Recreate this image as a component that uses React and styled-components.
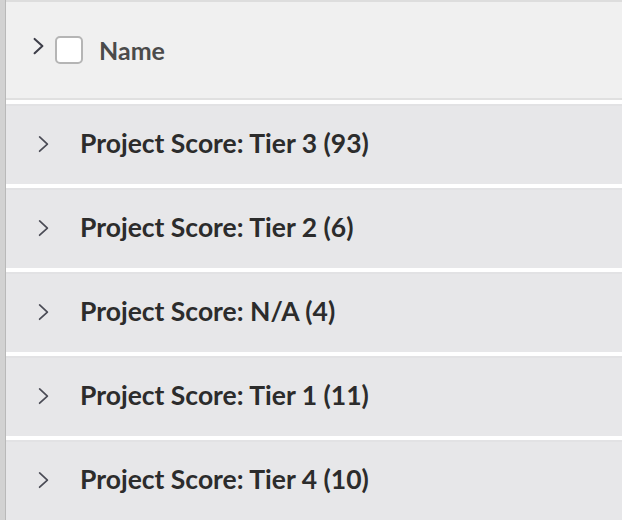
import styled, { createGlobalStyle } from "styled-components";

const GlobalStyle = createGlobalStyle`
  html, body {
    margin: 0;
    padding: 0;
    background: #ffffff;
  }
  body {
    font-family: "Lato", "Open Sans", sans-serif;
  }
`;

export const Page = styled.div`
  display: flex;
  width: 622px;
  height: 520px;
  overflow: hidden;
`;

export const Backdrop = styled.div`
  width: 5px;
  flex-shrink: 0;
  background: #d2d2d2;
  border-right: 1px solid #b9b9b9;
`;

export const Panel = styled.div`
  flex: 1;
  display: flex;
  flex-direction: column;
  gap: 4px;
  border-top: 2px solid #dddddd;
  background: #ffffff;
`;

export const Header = styled.div`
  height: 98px;
  display: flex;
  align-items: center;
  background: #f0f0f0;
  border-bottom: 2px solid #e0e0e0;
  padding-left: 26px;
  box-sizing: border-box;
  flex-shrink: 0;
`;

export const HeaderChevron = styled.span`
  display: flex;
  margin-top: -8px;
  margin-right: 10px;
  color: #3e3f4a;
`;

export const Checkbox = styled.span`
  width: 24px;
  height: 24px;
  border: 2px solid #b5b5b5;
  border-radius: 5px;
  background: #ffffff;
  margin-right: 16px;
`;

export const HeaderLabel = styled.span`
  font-size: 25px;
  font-weight: 700;
  color: #4b4b4b;
`;

export const Row = styled.div`
  height: 80px;
  display: flex;
  align-items: center;
  background: #e7e7e9;
  border-top: 2px solid #e2e2e4;
  box-sizing: border-box;
  padding-left: 31px;
  padding-bottom: 5px;
  flex-shrink: 0;
`;

export const RowChevron = styled.span`
  display: flex;
  color: #4a4b55;
  margin-right: 30px;
  margin-top: 3px;
`;

export const RowLabel = styled.span`
  font-size: 26.5px;
  font-weight: 700;
  color: #2c2c2c;
`;

const Chevron = ({ size, stroke }) => (
  <svg width={size} height={size * 1.4} viewBox="0 0 10 14" fill="none">
    <path
      d="M2 1.5 L8 7 L2 12.5"
      stroke="currentColor"
      strokeWidth={stroke}
      strokeLinecap="round"
      strokeLinejoin="round"
    />
  </svg>
);

const groups = [
  { label: "Tier 3", count: 93 },
  { label: "Tier 2", count: 6 },
  { label: "N/A", count: 4 },
  { label: "Tier 1", count: 11 },
  { label: "Tier 4", count: 10 },
];

function App() {
  return (
    <>
      <GlobalStyle />
      <Page>
        <Backdrop />
        <Panel>
          <Header>
            <HeaderChevron>
              <Chevron size={13} stroke={1.6} />
            </HeaderChevron>
            <Checkbox />
            <HeaderLabel>Name</HeaderLabel>
          </Header>
          {groups.map((g) => (
            <Row key={g.label}>
              <RowChevron>
                <Chevron size={13} stroke={1.3} />
              </RowChevron>
              <RowLabel>
                Project Score: {g.label} ({g.count})
              </RowLabel>
            </Row>
          ))}
        </Panel>
      </Page>
    </>
  );
}

export default App;
